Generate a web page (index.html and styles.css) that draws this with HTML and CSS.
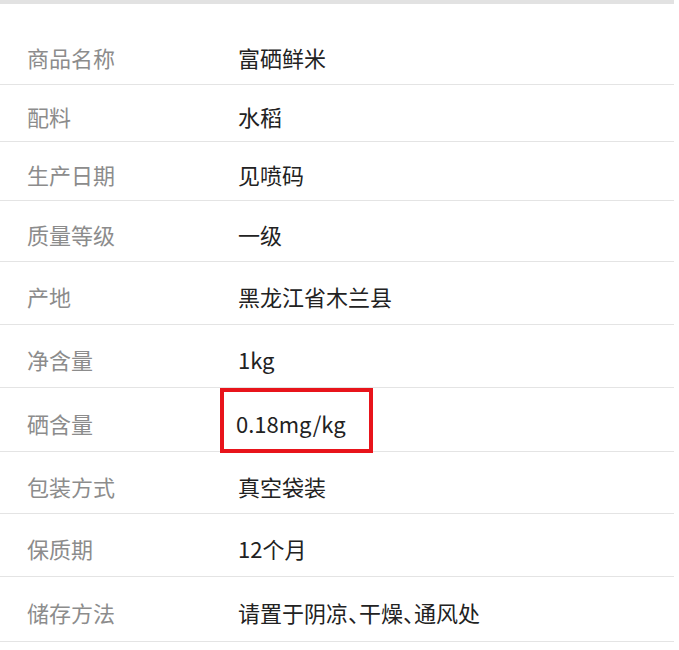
FILE: index.html
```html
<!DOCTYPE html>
<html lang="zh-CN">
<head>
<meta charset="utf-8">
<link rel="stylesheet" href="styles.css">
</head>
<body>
<div class="page">
  <div class="topbar"></div>
  <div class="list">
    <div class="row"><span class="label">商品名称</span><span class="value">富硒鲜米</span></div>
    <div class="row"><span class="label">配料</span><span class="value">水稻</span></div>
    <div class="row"><span class="label">生产日期</span><span class="value">见喷码</span></div>
    <div class="row"><span class="label">质量等级</span><span class="value">一级</span></div>
    <div class="row"><span class="label">产地</span><span class="value">黑龙江省木兰县</span></div>
    <div class="row"><span class="label">净含量</span><span class="value">1kg</span></div>
    <div class="row"><span class="label">硒含量</span><span class="value highlight">0.18mg/kg<span class="mark"></span></span></div>
    <div class="row"><span class="label">包装方式</span><span class="value">真空袋装</span></div>
    <div class="row"><span class="label">保质期</span><span class="value">12个月</span></div>
    <div class="row"><span class="label">储存方法</span><span class="value">请置于阴凉<span class="punct">、</span>干燥<span class="punct">、</span>通风处</span></div>
  </div>
</div>
</body>
</html>
```
FILE: styles.css
```css
html, body {
  margin: 0;
  padding: 0;
  background: #ffffff;
}
.page {
  width: 674px;
  font-family: "Noto Sans CJK SC", "Noto Sans", sans-serif;
}
.topbar {
  height: 4px;
  background: #e2e2e2;
}
.list {
  padding-top: 20px;
  display: grid;
  grid-template-rows: 61px 57px 59px 61px 63px 63px 64px 62px 63px 65px;
}
.row {
  box-sizing: border-box;
  display: flex;
  align-items: center;
  padding-top: 6px;
  border-bottom: 1px solid #e4e4e4;
}
.label {
  width: 238px;
  flex: none;
  padding-left: 27px;
  box-sizing: border-box;
  font-size: 22px;
  color: #8c8c8c;
  line-height: 1;
}
.value {
  font-size: 22px;
  color: #222222;
  line-height: 1;
}
.punct {
  font-feature-settings: "halt";
}
.highlight {
  position: relative;
  margin-left: -2px;
}
.mark {
  position: absolute;
  left: -16px;
  top: -24px;
  width: 145px;
  height: 57px;
  border: 4px solid #e8141b;
}
```
